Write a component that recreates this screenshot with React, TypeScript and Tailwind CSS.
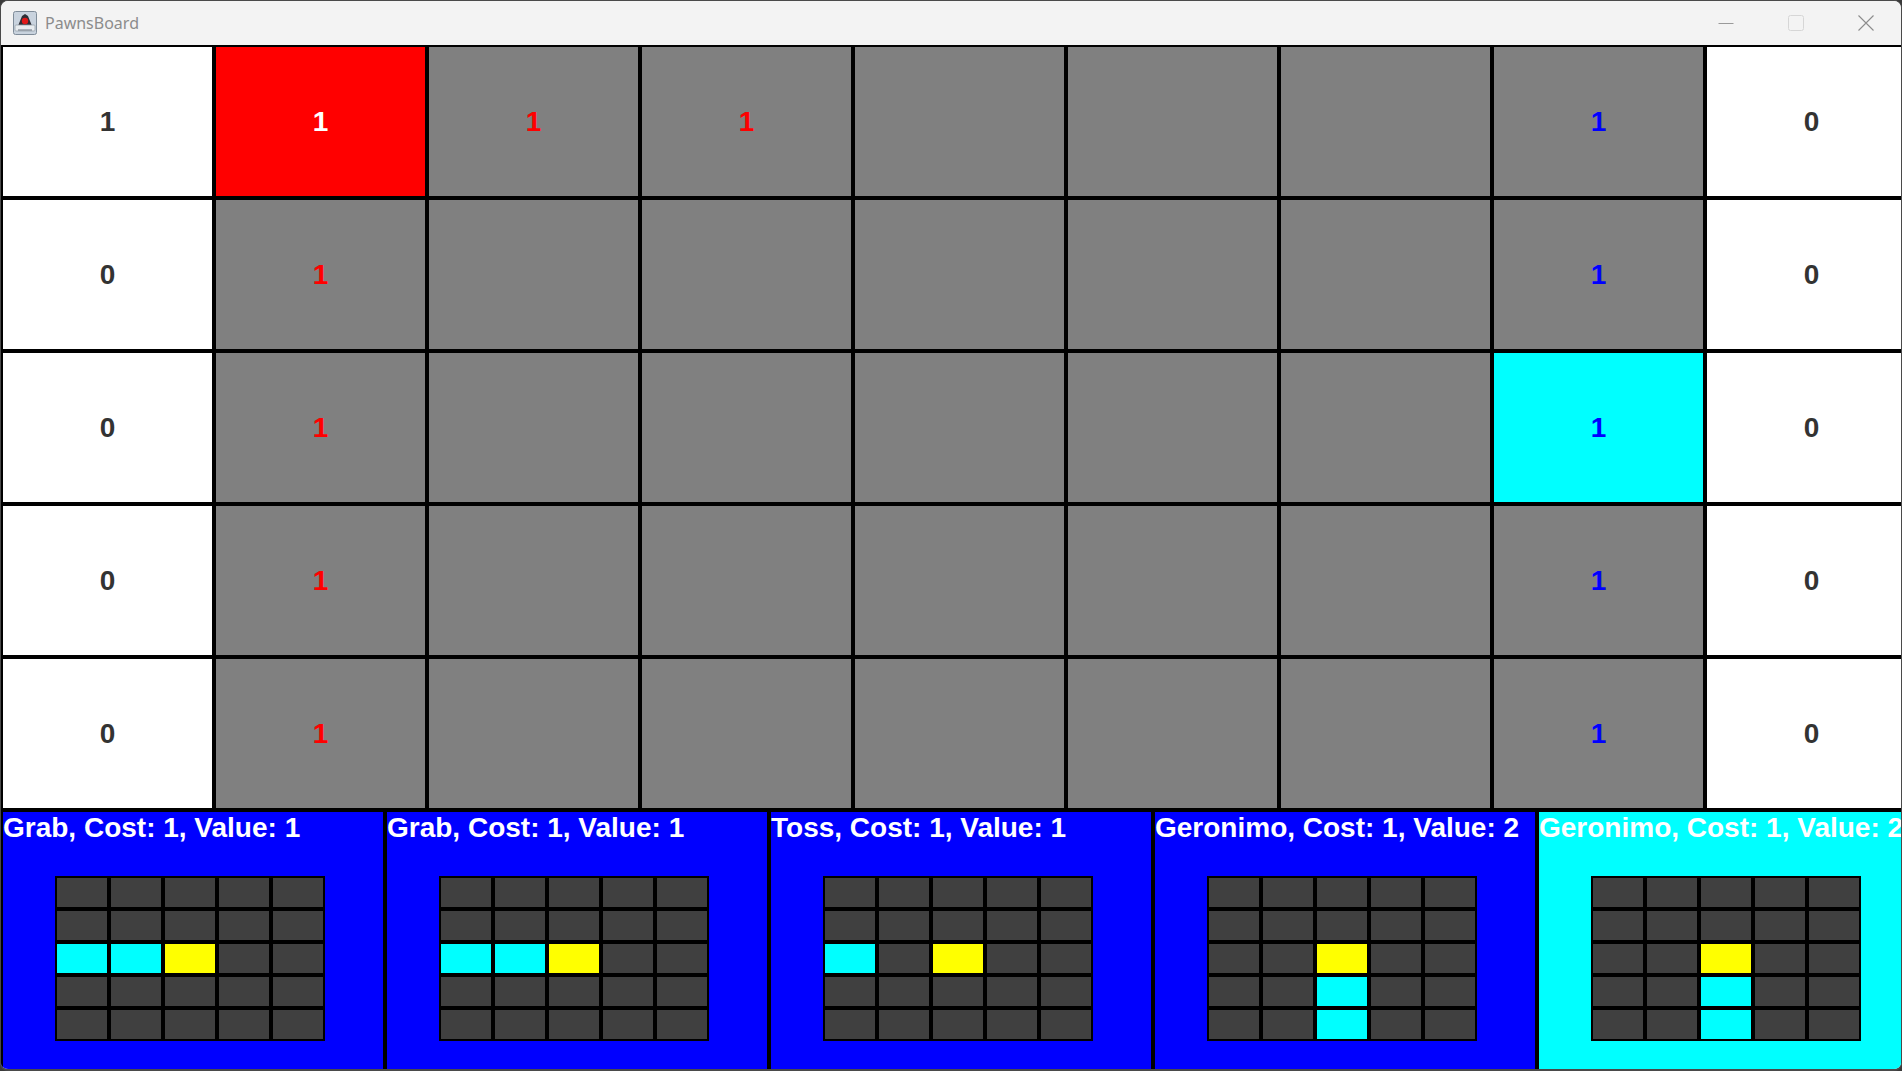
import React from "react"

type Cell = { bg: string; fg: string; text: string }

const W = "bg-white"
const G = "bg-[#808080]"

function buildBoard(): Cell[][] {
  const rows: Cell[][] = []
  for (let r = 0; r < 5; r++) {
    const row: Cell[] = []
    row.push({ bg: W, fg: "text-[#333333]", text: r === 0 ? "1" : "0" })
    if (r === 0) {
      row.push({ bg: "bg-[#ff0000]", fg: "text-white", text: "1" })
      row.push({ bg: G, fg: "text-[#ff0000]", text: "1" })
      row.push({ bg: G, fg: "text-[#ff0000]", text: "1" })
    } else {
      row.push({ bg: G, fg: "text-[#ff0000]", text: "1" })
      row.push({ bg: G, fg: "", text: "" })
      row.push({ bg: G, fg: "", text: "" })
    }
    row.push({ bg: G, fg: "", text: "" })
    row.push({ bg: G, fg: "", text: "" })
    row.push({ bg: G, fg: "", text: "" })
    row.push({ bg: r === 2 ? "bg-[#00ffff]" : G, fg: "text-[#0000ff]", text: "1" })
    row.push({ bg: W, fg: "text-[#333333]", text: "0" })
    rows.push(row)
  }
  return rows
}

// influence grids: "." empty, "c" cyan, "y" yellow (the card itself)
const grab = [".....", ".....", "ccy..", ".....", "....."]
const toss = [".....", ".....", "c.y..", ".....", "....."]
const geronimo = [".....", ".....", "..y..", "..c..", "..c.."]

const cards = [
  { title: "Grab, Cost: 1, Value: 1", grid: grab, selected: false },
  { title: "Grab, Cost: 1, Value: 1", grid: grab, selected: false },
  { title: "Toss, Cost: 1, Value: 1", grid: toss, selected: false },
  { title: "Geronimo, Cost: 1, Value: 2", grid: geronimo, selected: false },
  { title: "Geronimo, Cost: 1, Value: 2", grid: geronimo, selected: true },
]

function AppIcon() {
  return (
    <svg width="24" height="24" viewBox="0 0 24 24">
      <rect x="0.5" y="0.5" width="23" height="23" rx="2" fill="#c9d3de" stroke="#7f8c99" />
      <path d="M3 20 L9 5 L12 3 L15 5 L21 20 Z" fill="#2e2e36" />
      <rect x="2" y="14" width="20" height="6" rx="1" fill="#e8ecef" stroke="#9aa4ad" strokeWidth="0.8" />
      <circle cx="12" cy="10" r="3.2" fill="#e01818" />
      <path d="M5 19 h14" stroke="#6b7580" strokeWidth="1" />
    </svg>
  )
}

function TitleBar() {
  return (
    <div className="h-[44px] shrink-0 flex items-center bg-[#f3f3f3]">
      <div className="ml-[12px] w-[24px] h-[24px]">
        <AppIcon />
      </div>
      <span className="ml-[8px] text-[16px] text-[#8c8c8c] font-['Noto_Sans',sans-serif]">PawnsBoard</span>
      <div className="ml-auto flex items-center h-full">
        <div className="w-[58px] h-full flex items-center justify-center">
          <svg width="16" height="16" viewBox="0 0 16 16">
            <path d="M0.5 8.5 H15.5" stroke="#9a9a9a" strokeWidth="1" />
          </svg>
        </div>
        <div className="w-[58px] h-full flex items-center justify-center ml-[12px]">
          <svg width="16" height="16" viewBox="0 0 16 16">
            <rect x="0.5" y="0.5" width="15" height="15" rx="2" fill="none" stroke="#d6d6d6" strokeWidth="1" />
          </svg>
        </div>
        <div className="w-[58px] h-full flex items-center justify-center ml-[12px] mr-[6px]">
          <svg width="16" height="16" viewBox="0 0 16 16">
            <path d="M0.5 0.5 L15.5 15.5 M15.5 0.5 L0.5 15.5" stroke="#8c8c8c" strokeWidth="1.1" />
          </svg>
        </div>
      </div>
    </div>
  )
}

function Board() {
  const rows = buildBoard()
  return (
    <div className="flex flex-col">
      {rows.map((row, r) => (
        <div key={r} className="flex">
          {row.map((c, i) => (
            <div
              key={i}
              className={`w-[213px] h-[153px] shrink-0 border-2 border-black flex items-center justify-center ${c.bg}`}
            >
              <span className={`text-[28px] font-bold font-['Liberation_Sans',Arial,sans-serif] ${c.fg}`}>
                {c.text}
              </span>
            </div>
          ))}
        </div>
      ))}
    </div>
  )
}

function MiniGrid({ grid }: { grid: string[] }) {
  return (
    <div className="ml-[52px] mt-[32px] flex flex-col w-[270px]">
      {grid.map((line, r) => (
        <div key={r} className="flex">
          {line.split("").map((ch, i) => (
            <div
              key={i}
              className={`w-[54px] h-[33px] border-2 border-black ${
                ch === "c" ? "bg-[#00ffff]" : ch === "y" ? "bg-[#ffff00]" : "bg-[#404040]"
              }`}
            />
          ))}
        </div>
      ))}
    </div>
  )
}

function Hand() {
  return (
    <div className="flex">
      {cards.map((card, i) => (
        <div
          key={i}
          className={`w-[384px] h-[270px] shrink-0 border-2 border-black overflow-hidden ${
            card.selected ? "bg-[#00ffff]" : "bg-[#0000ff]"
          }`}
        >
          <div className="text-[28px] leading-[32px] font-bold text-white whitespace-nowrap font-['Liberation_Sans',Arial,sans-serif]">
            {card.title}
          </div>
          <MiniGrid grid={card.grid} />
        </div>
      ))}
    </div>
  )
}

export default function App() {
  return (
    <div className="w-[1902px] h-[1071px] bg-[#3a3a3a] overflow-hidden">
      <div className="w-[1902px] h-[1071px] rounded-[8px] border border-[#4a4a4a] border-b-2 overflow-hidden flex flex-col bg-[#f3f3f3]">
        <TitleBar />
        <div className="flex-1 overflow-hidden">
          <Board />
          <Hand />
        </div>
      </div>
    </div>
  )
}
